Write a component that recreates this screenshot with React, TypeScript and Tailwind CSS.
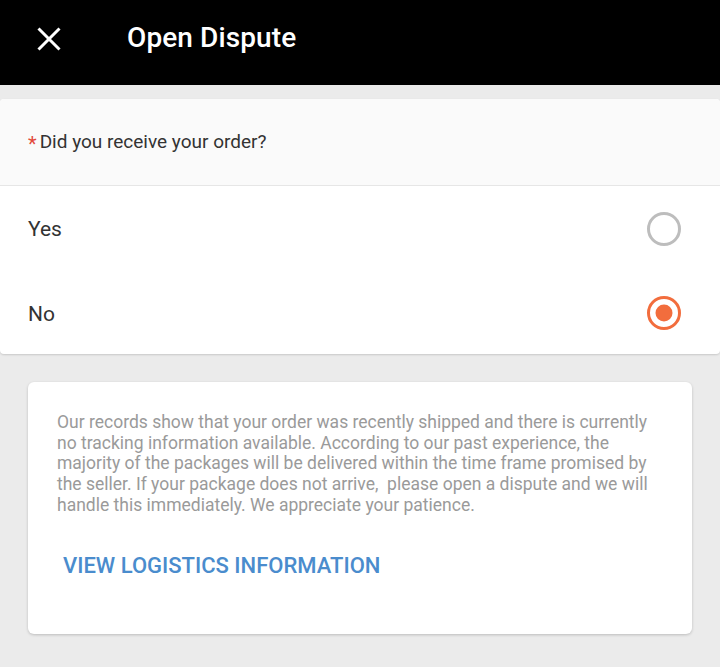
import React from "react";

export default function App() {
  const lines = [
    "Our records show that your order was recently shipped and there is currently",
    "no tracking information available. According to our past experience, the",
    "majority of the packages will be delivered within the time frame promised by",
    "the seller. If your package does not arrive,\u00a0 please open a dispute and we will",
    "handle this immediately. We appreciate your patience.",
  ];
  return (
    <div className="w-[720px] h-[667px] bg-[#ebebeb] overflow-hidden" style={{ fontFamily: "Roboto, 'Liberation Sans', sans-serif" }}>
      <div className="h-[85px] bg-black flex items-center">
        <div className="w-[98px] flex justify-center">
          <svg width="24" height="24" viewBox="0 0 24 24" className="-ml-[1px] -mt-[8px]">
            <path d="M1.5 1.5 L22.5 22.5 M22.5 1.5 L1.5 22.5" stroke="white" strokeWidth="3" />
          </svg>
        </div>
        <div className="text-white text-[28px] font-medium ml-[29px] -mt-[9px] tracking-[0.1px]">Open Dispute</div>
      </div>
      <div className="mt-[14px] bg-white rounded-[4px] shadow-[0_1px_2px_rgba(0,0,0,0.15)] overflow-hidden">
        <div className="h-[87px] bg-[#fafafa] border-b border-[#e6e6e6] flex items-center pl-[28px]">
          <span className="text-[#e24a3b] text-[20px] mr-[3px] mt-[4px]">*</span>
          <span className="text-[#333333] text-[19px]">Did you receive your order?</span>
        </div>
        <div className="h-[86px] flex items-center justify-between pl-[28px] pr-[38px]">
          <span className="text-[#333333] text-[21px] mt-[2px]">Yes</span>
          <svg width="36" height="36" viewBox="0 0 36 36">
            <circle cx="18" cy="18" r="15.5" fill="none" stroke="#bdbdbd" strokeWidth="3" />
          </svg>
        </div>
        <div className="h-[82px] flex items-center justify-between pl-[28px] pr-[38px]">
          <span className="text-[#333333] text-[21px] mt-[3px]">No</span>
          <svg width="36" height="36" viewBox="0 0 36 36">
            <circle cx="18" cy="18" r="15.5" fill="none" stroke="#f26d3d" strokeWidth="3" />
            <circle cx="18" cy="18" r="8.5" fill="#f26d3d" />
          </svg>
        </div>
      </div>
      <div className="mx-[28px] mt-[28px] h-[252px] bg-white rounded-[6px] shadow-[0_1px_3px_rgba(0,0,0,0.2)] pl-[29px] pt-[30px]">
        <div className="text-[#9a9a9a] text-[17.5px] leading-[20.7px] whitespace-nowrap">
          {lines.map((l, i) => (
            <div key={i}>{l}</div>
          ))}
        </div>
        <div className="mt-[33px] ml-[6px] text-[#4a8ccd] text-[22px] font-medium">
          VIEW LOGISTICS INFORMATION
        </div>
      </div>
    </div>
  );
}
